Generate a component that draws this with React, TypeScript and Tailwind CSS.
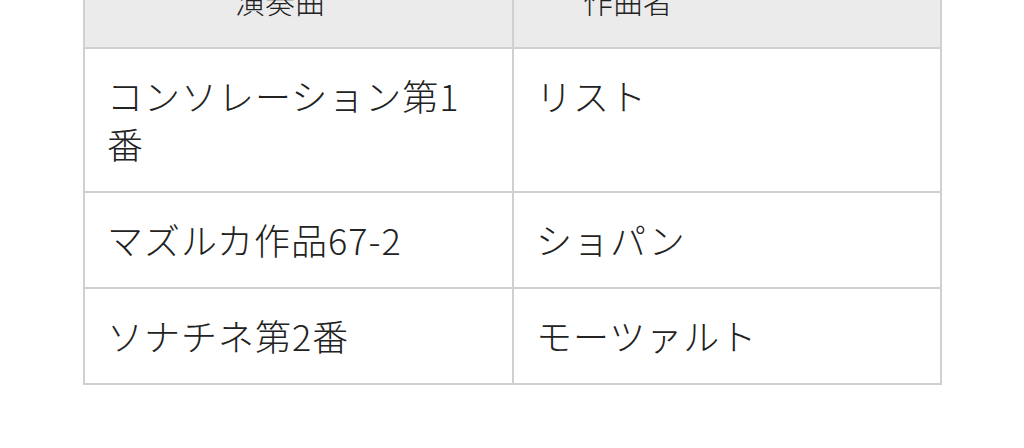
import React from "react";

const rows: [string, string][] = [
  ["コンソレーション第1番", "リスト"],
  ["マズルカ作品67-2", "ショパン"],
  ["ソナチネ第2番", "モーツァルト"],
];

export default function App() {
  return (
    <div
      className="w-[1024px] h-[448px] overflow-hidden bg-white text-[#222]"
      style={{ fontFamily: '"Noto Sans CJK JP", "Noto Sans", sans-serif' }}
    >
      <table className="ml-[83px] -mt-[49px] w-[859px] table-fixed border-collapse border-2 border-[#cfd1cd]">
        <thead>
          <tr className="bg-[#ebebeb]">
            <th className="w-[429px] border-2 border-[#cfd1cd] py-[23px] pl-[150px] text-left text-[30px] font-light leading-[48px]">
              演奏曲
            </th>
            <th className="border-2 border-[#cfd1cd] py-[23px] pl-[69px] text-left text-[30px] font-light leading-[48px]">
              作曲者
            </th>
          </tr>
        </thead>
        <tbody>
          {rows.map(([a, b]) => (
            <tr key={a}>
              <td className="border-2 border-[#cfd1cd] px-[22px] pt-[22px] pb-[24px] align-top text-[36px] font-light leading-[48px] tracking-[1px]">
                {a}
              </td>
              <td className="border-2 border-[#cfd1cd] px-[22px] pt-[22px] pb-[24px] align-top text-[36px] font-light leading-[48px] tracking-[1px]">
                {b}
              </td>
            </tr>
          ))}
        </tbody>
      </table>
    </div>
  );
}
